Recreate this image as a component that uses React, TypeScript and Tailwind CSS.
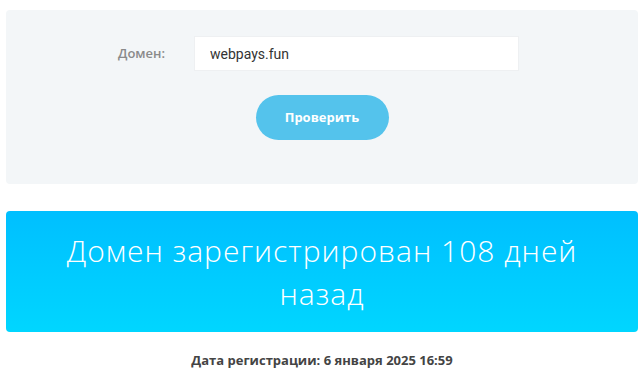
export default function App() {
  return (
    <div className="w-[644px] h-[386px] bg-white px-[6px] pt-[10px] font-['Open_Sans',sans-serif]">
      {/* Form panel */}
      <div className="h-[174px] rounded bg-[#f3f6f8] pt-[26px] flex flex-col items-center">
        <div className="self-stretch flex items-center pl-[112px]">
          <label className="w-[76px] text-[13px] font-semibold text-[#8a8a8a]">
            Домен:
          </label>
          <input
            defaultValue="webpays.fun"
            className="w-[325px] h-[35px] bg-white border border-[#eef0f2] px-[15px] text-[14px] text-[#333] font-['Roboto',sans-serif] outline-none"
          />
        </div>
        <button className="mt-[24px] w-[133px] h-[45px] rounded-full bg-[#54c3ec] text-white text-[13px] font-bold">
          Проверить
        </button>
      </div>

      {/* Result */}
      <div className="mt-[27px] h-[121px] rounded bg-gradient-to-b from-[#00bfff] to-[#00d6ff] flex items-center justify-center px-10">
        <p className="text-center text-white text-[30px] font-light leading-[43px] tracking-[1px]">
          Домен зарегистрирован 108 дней назад
        </p>
      </div>

      <p className="mt-[19px] text-center text-[13px] font-bold text-[#444]">
        Дата регистрации: 6 января 2025 16:59
      </p>
    </div>
  );
}
